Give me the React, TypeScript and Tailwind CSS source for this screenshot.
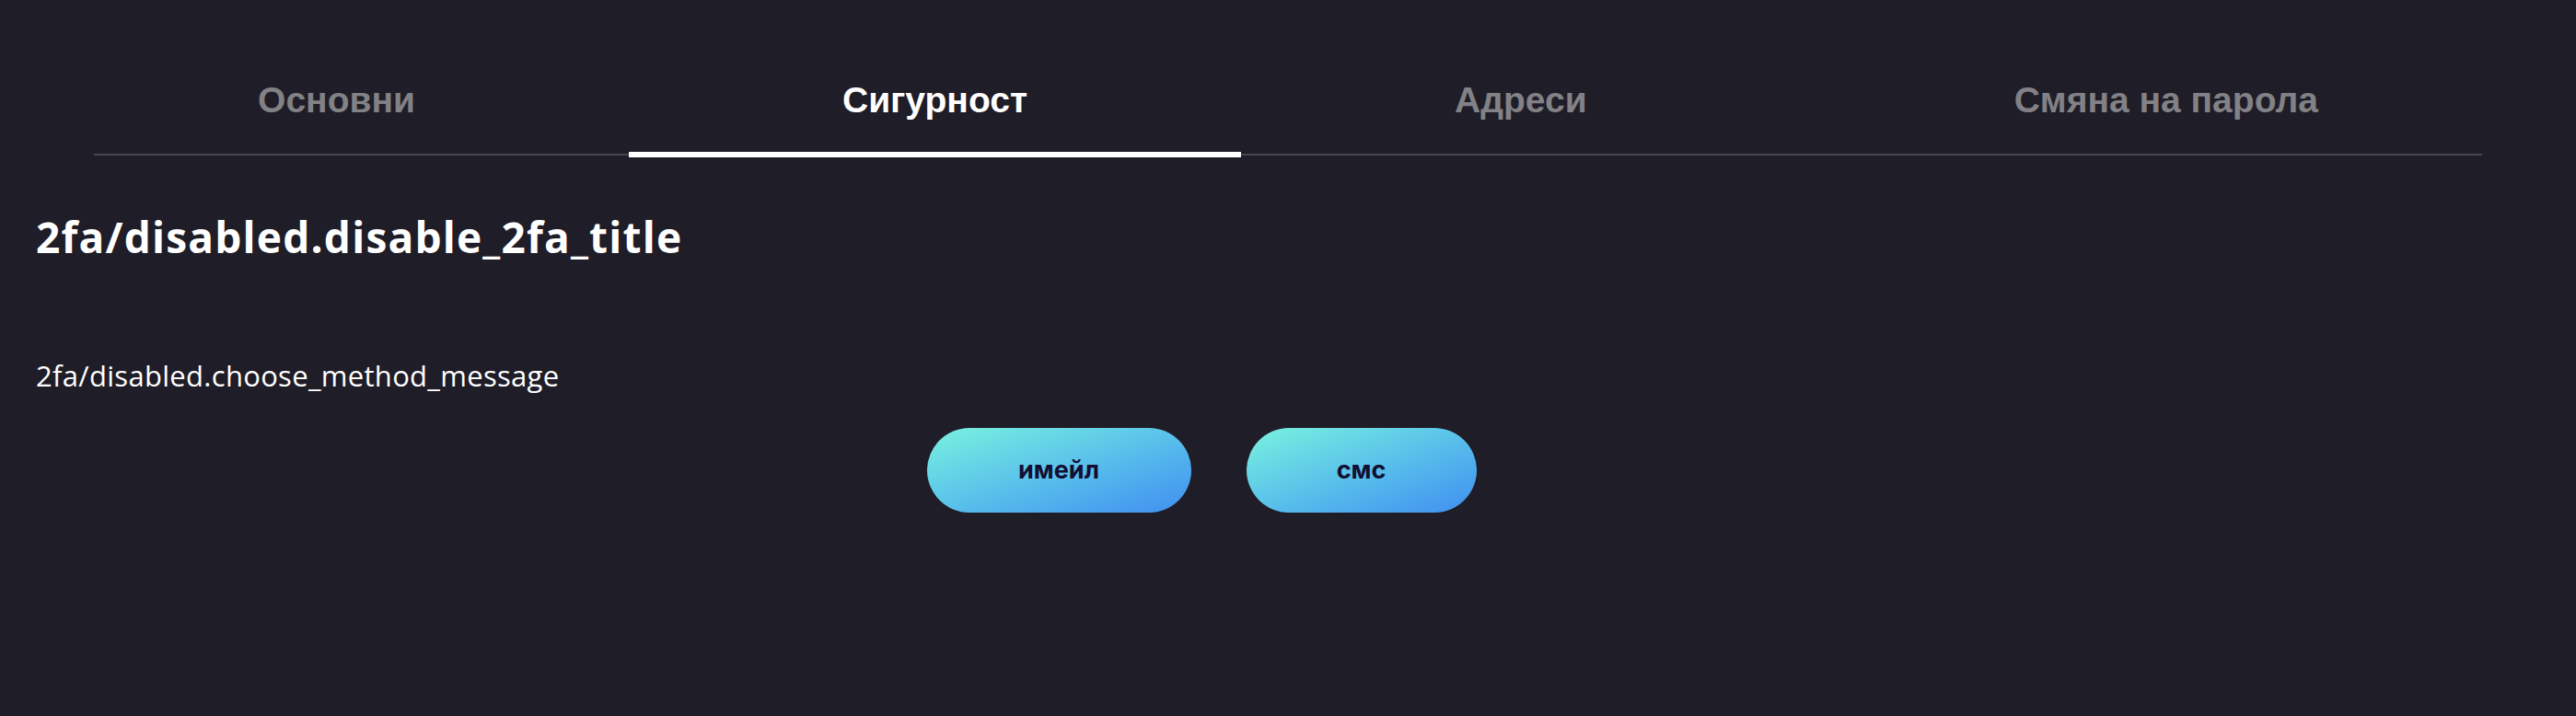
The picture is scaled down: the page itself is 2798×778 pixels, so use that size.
const TABS = ["Основни", "Сигурност", "Адреси", "Смяна на парола"];

export default function App() {
  const active = 1;

  return (
    <div className="min-h-screen bg-[#1f1d27] text-white">
      {/* Tabs */}
      <div className="mx-[102px] border-b-2 border-[#48474e]">
        <div className="-mx-[49px] flex justify-center">
          {TABS.map((t, i) => (
            <button
              key={t}
              className={
                "-mb-[4px] border-b-[6px] px-[232px] pt-[85px] pb-[32px] font-['Liberation_Sans',Arial,sans-serif] text-[39px] leading-[48px] font-bold whitespace-nowrap " +
                (i === active ? "border-white text-white" : "border-transparent text-[#828186]")
              }
            >
              {t}
            </button>
          ))}
        </div>
      </div>

      {/* Content */}
      <div className="px-[39px] font-['Open_Sans',sans-serif]">
        <h1 className="mt-[62px] text-[46px] leading-[52px] font-bold tracking-[1.2px]">2fa/disabled.disable_2fa_title</h1>
        <p className="mt-[107px] text-[31px] leading-[36px] tracking-[0.3px]">2fa/disabled.choose_method_message</p>
      </div>

      <div className="mt-[39px] flex justify-center gap-[60px] pr-[188px] font-['Inter',sans-serif]">
        <button className="h-[92px] w-[287px] rounded-full bg-linear-to-br from-[#7af2de] to-[#428ef0] text-[27px] font-bold text-[#120f33]">
          имейл
        </button>
        <button className="h-[92px] w-[250px] rounded-full bg-linear-to-br from-[#7af2de] to-[#428ef0] text-[27px] font-bold text-[#120f33]">
          смс
        </button>
      </div>
    </div>
  );
}
